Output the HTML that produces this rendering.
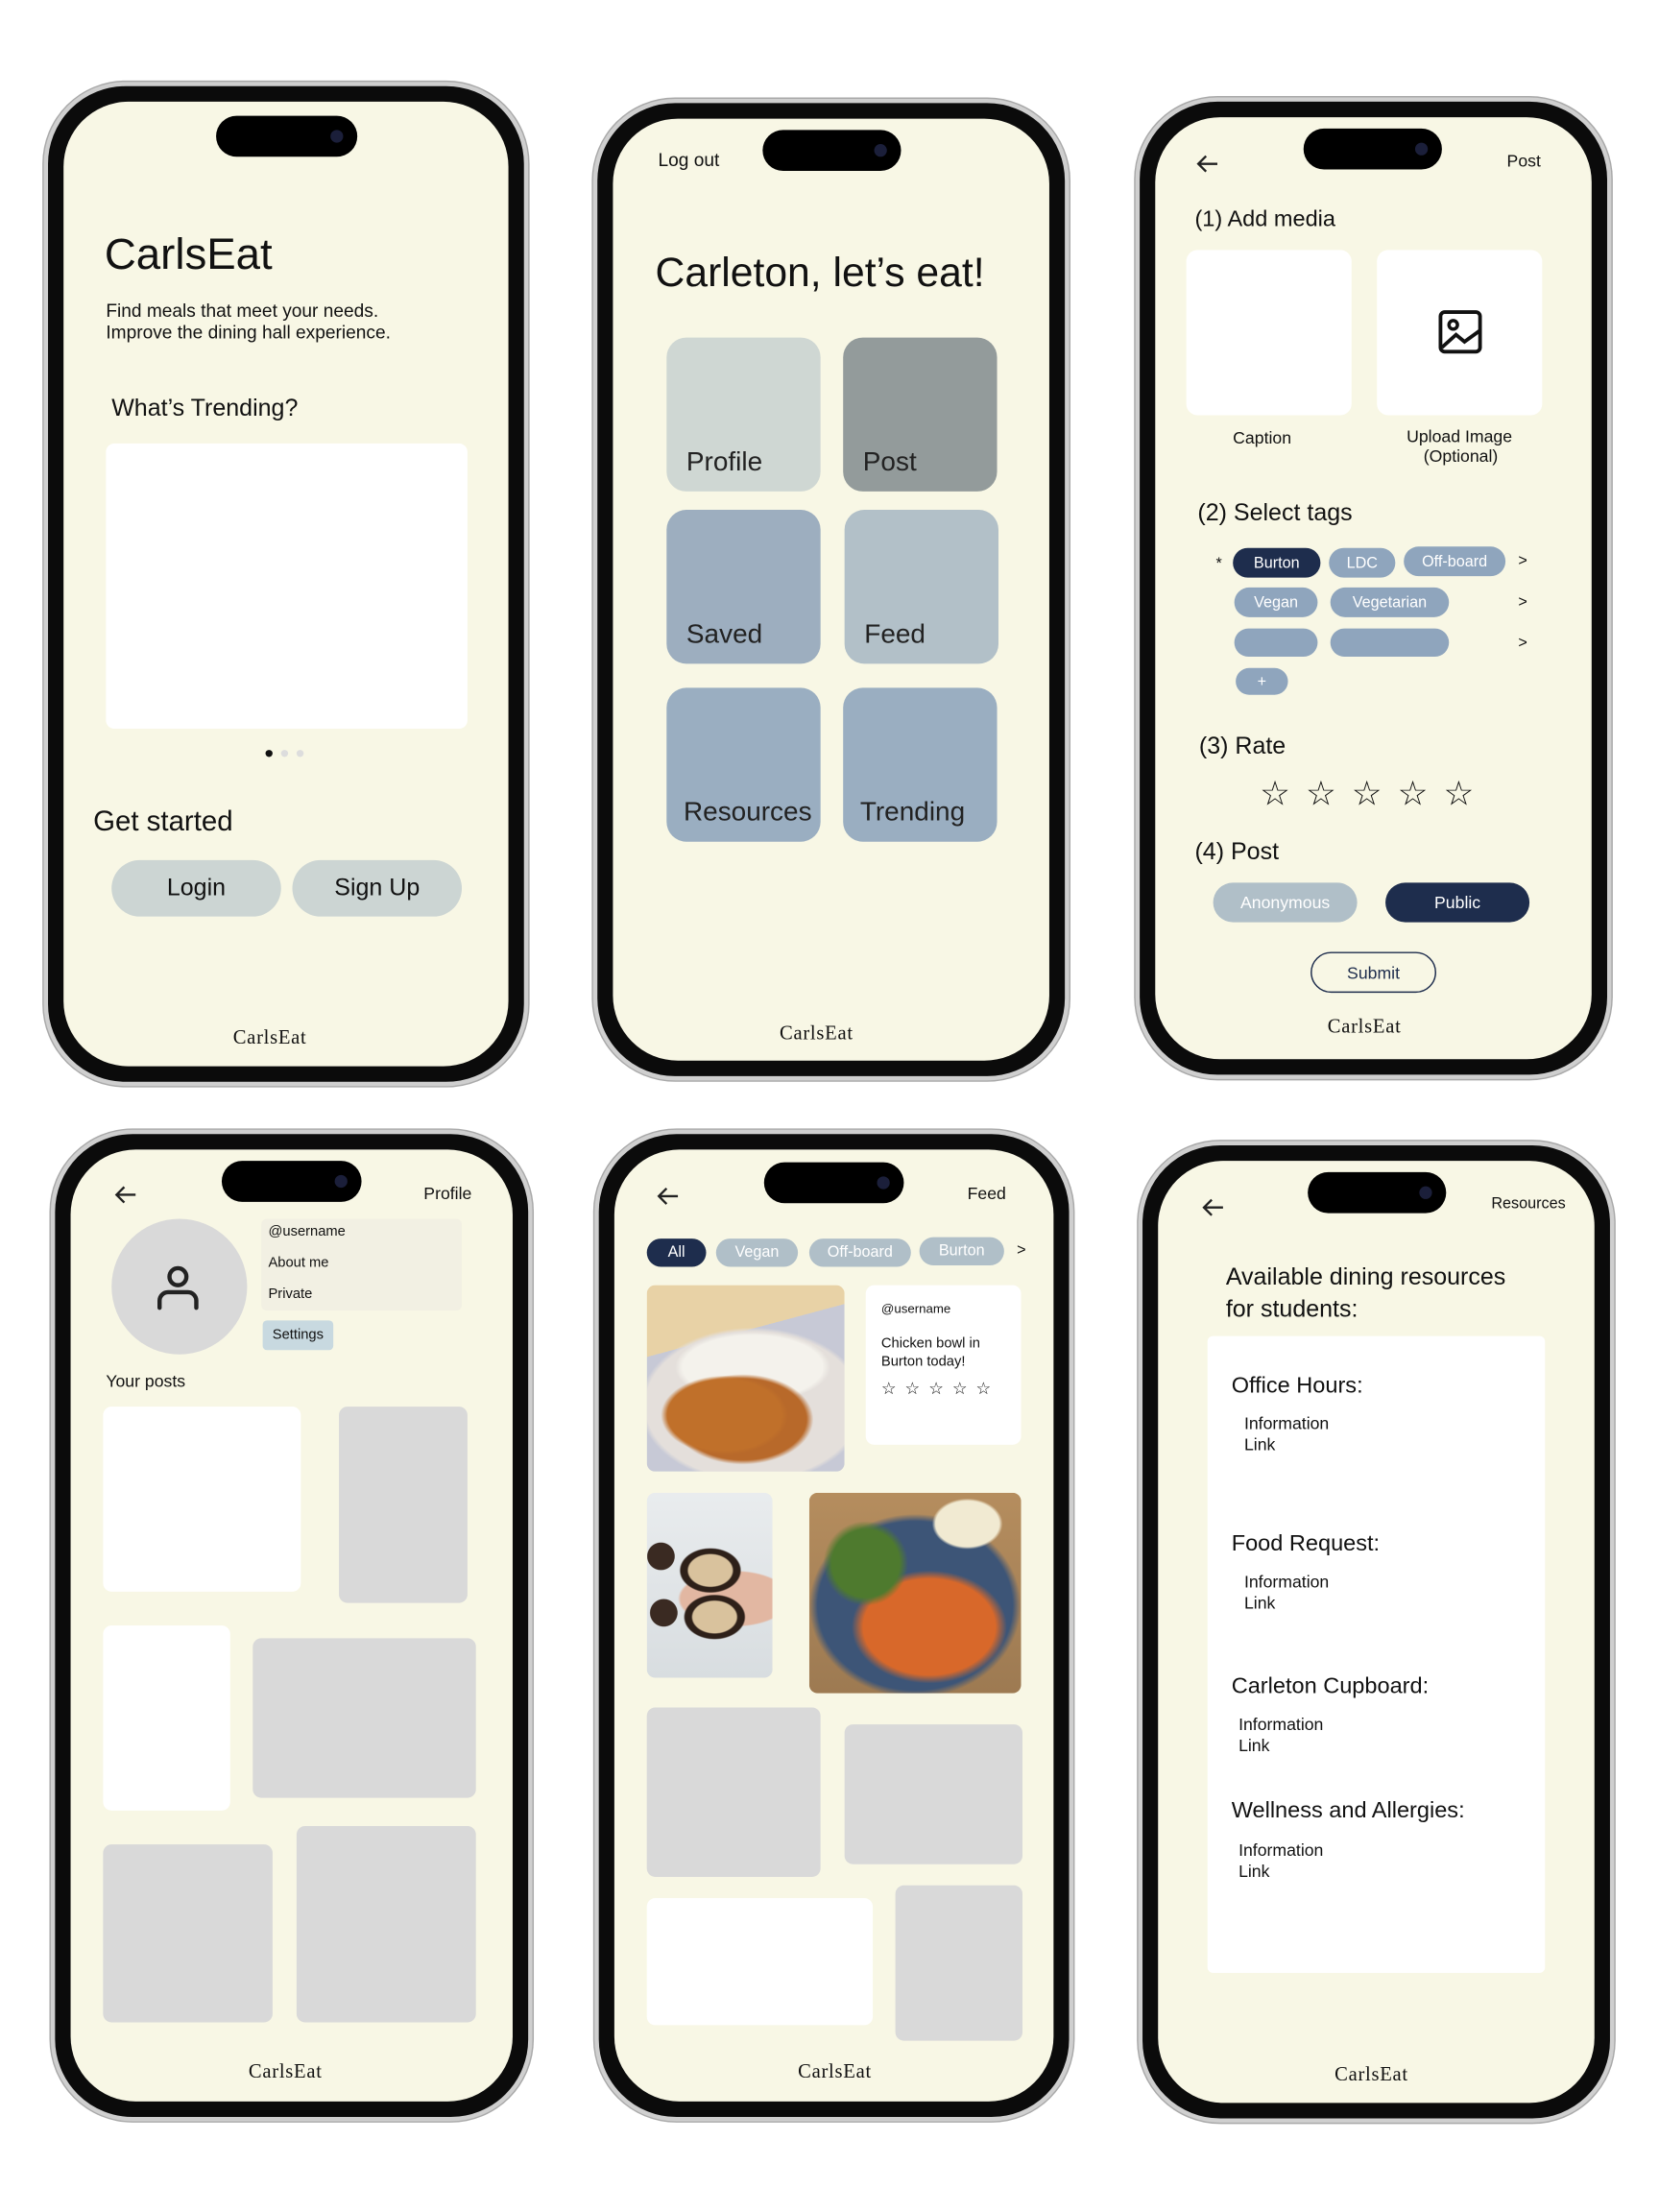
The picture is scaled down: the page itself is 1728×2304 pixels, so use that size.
<!DOCTYPE html>
<html><head><meta charset="utf-8">
<style>
*{margin:0;padding:0;box-sizing:border-box}
html,body{width:1728px;height:2304px;background:#fff;overflow:hidden}
#root{position:absolute;left:0;top:0;width:1166px;height:1555px;transform:scale(1.471);transform-origin:0 0;font-family:"Liberation Sans",sans-serif;color:#111}
.ph{position:absolute;border-radius:58px;background:#0b0b0b;border:3px solid #cfcfcf;box-shadow:0 0 0 1px #a9a9a9}
.sc{position:absolute;inset:11px;border-radius:46px;background:#f8f7e5}
.isl{position:absolute;background:#000;border-radius:15px;height:29px}
.isl::after{content:"";position:absolute;right:10px;top:10px;width:9px;height:9px;border-radius:50%;background:#1b1f3a}
.t{position:absolute;line-height:1;transform:translateY(-50%);white-space:nowrap}
.b{position:absolute}
.ft{font-family:"Liberation Serif",serif;font-size:14px;letter-spacing:0.5px}
.tile{position:absolute;border-radius:14px}
.tile span{position:absolute;left:14px;bottom:9px;font-size:19px;color:#222}
.chip{position:absolute;border-radius:11px;color:#fff;font-size:11px;display:flex;align-items:center;justify-content:center}
.wh{background:#fff}
.gr{background:#d9d9d9}
</style></head><body><div id="root">

<div class="ph" style="left:31px;top:58px;width:343px;height:711px"><div class="sc"></div></div>
<div class="ph" style="left:420px;top:70px;width:337px;height:695px"><div class="sc"></div></div>
<div class="ph" style="left:804px;top:69px;width:337px;height:695px"><div class="sc"></div></div>
<div class="ph" style="left:36px;top:800px;width:341px;height:702px"><div class="sc"></div></div>
<div class="ph" style="left:421px;top:800px;width:339px;height:702px"><div class="sc"></div></div>
<div class="ph" style="left:806px;top:808px;width:337px;height:695px"><div class="sc"></div></div>

<div class="isl" style="left:153px;top:82px;width:100px"></div>
<div class="isl" style="left:540px;top:92px;width:98px"></div>
<div class="isl" style="left:923px;top:91px;width:98px"></div>
<div class="isl" style="left:157px;top:822px;width:99px"></div>
<div class="isl" style="left:541px;top:823px;width:99px"></div>
<div class="isl" style="left:926px;top:830px;width:98px"></div>

<!-- Phone 1 -->
<div class="t" style="left:74px;top:180px;font-size:31px">CarlsEat</div>
<div class="t" style="left:75px;top:220px;font-size:13px">Find meals that meet your needs.</div>
<div class="t" style="left:75px;top:235px;font-size:13px">Improve the dining hall experience.</div>
<div class="t" style="left:79px;top:289px;font-size:17px">What’s Trending?</div>
<div class="b wh" style="left:75px;top:314px;width:256px;height:202px;border-radius:6px"></div>
<div class="b" style="left:188px;top:531px;width:5px;height:5px;border-radius:50%;background:#111"></div>
<div class="b" style="left:199px;top:531px;width:5px;height:5px;border-radius:50%;background:#ddd"></div>
<div class="b" style="left:210px;top:531px;width:5px;height:5px;border-radius:50%;background:#ddd"></div>
<div class="t" style="left:66px;top:582px;font-size:20px">Get started</div>
<div class="b" style="left:79px;top:609px;width:120px;height:40px;border-radius:20px;background:#ccd5d3;font-size:17px;display:flex;align-items:center;justify-content:center">Login</div>
<div class="b" style="left:207px;top:609px;width:120px;height:40px;border-radius:20px;background:#ccd5d3;font-size:17px;display:flex;align-items:center;justify-content:center">Sign Up</div>
<div class="t ft" style="left:165px;top:736px">CarlsEat</div>

<!-- Phone 2 -->
<div class="t" style="left:466px;top:113px;font-size:13px">Log out</div>
<div class="t" style="left:464px;top:194px;font-size:29px">Carleton, let’s eat!</div>
<div class="tile" style="left:472px;top:239px;width:109px;height:109px;background:#cfd7d3"><span>Profile</span></div>
<div class="tile" style="left:597px;top:239px;width:109px;height:109px;background:#939b9b"><span>Post</span></div>
<div class="tile" style="left:472px;top:361px;width:109px;height:109px;background:#9daebf"><span>Saved</span></div>
<div class="tile" style="left:598px;top:361px;width:109px;height:109px;background:#b2c0c8"><span>Feed</span></div>
<div class="tile" style="left:472px;top:487px;width:109px;height:109px;background:#9aaec1"><span style="left:12px">Resources</span></div>
<div class="tile" style="left:597px;top:487px;width:109px;height:109px;background:#9aaec1"><span style="left:12px">Trending</span></div>
<div class="t ft" style="left:552px;top:733px">CarlsEat</div>

<!-- Phone 3 -->
<svg class="b" style="left:847px;top:109px" width="16" height="14" viewBox="0 0 16 14"><path d="M15 7H2M7 1.5L1.5 7 7 12.5" fill="none" stroke="#222" stroke-width="1.6"/></svg>
<div class="t" style="left:1067px;top:114px;font-size:12px">Post</div>
<div class="t" style="left:846px;top:156px;font-size:16px">(1) Add media</div>
<div class="b wh" style="left:840px;top:177px;width:117px;height:117px;border-radius:8px"></div>
<div class="b wh" style="left:975px;top:177px;width:117px;height:117px;border-radius:8px"></div>
<svg class="b" style="left:1018px;top:219px" width="32" height="32" viewBox="0 0 32 32"><rect x="2" y="2" width="28" height="28" rx="3" fill="none" stroke="#111" stroke-width="2.6"/><circle cx="11" cy="11" r="3" fill="none" stroke="#111" stroke-width="2.4"/><path d="M3 27L13 18 19 23 30 15" fill="none" stroke="#111" stroke-width="2.6"/></svg>
<div class="t" style="left:873px;top:310px;font-size:12px">Caption</div>
<div class="t" style="left:996px;top:309px;font-size:12px">Upload Image</div>
<div class="t" style="left:1008px;top:323px;font-size:12px">(Optional)</div>
<div class="t" style="left:848px;top:363px;font-size:17px">(2) Select tags</div>
<div class="t" style="left:861px;top:400px;font-size:11px">*</div>
<div class="chip" style="left:873px;top:388px;width:62px;height:21px;background:#1e2d4d">Burton</div>
<div class="chip" style="left:941px;top:388px;width:47px;height:21px;background:#8fa5bd">LDC</div>
<div class="chip" style="left:994px;top:387px;width:72px;height:21px;background:#8fa5bd">Off-board</div>
<div class="t" style="left:1075px;top:398px;font-size:11px">&gt;</div>
<div class="chip" style="left:874px;top:416px;width:59px;height:21px;background:#8fa5bd">Vegan</div>
<div class="chip" style="left:942px;top:416px;width:84px;height:21px;background:#8fa5bd">Vegetarian</div>
<div class="t" style="left:1075px;top:427px;font-size:11px">&gt;</div>
<div class="chip" style="left:874px;top:445px;width:59px;height:20px;background:#8fa5bd"></div>
<div class="chip" style="left:942px;top:445px;width:84px;height:20px;background:#8fa5bd"></div>
<div class="t" style="left:1075px;top:456px;font-size:11px">&gt;</div>
<div class="chip" style="left:875px;top:473px;width:37px;height:19px;background:#8fa5bd">+</div>
<div class="t" style="left:849px;top:528px;font-size:17px">(3) Rate</div>
<div class="t" style="left:892px;top:563px;font-size:24px;letter-spacing:11px">☆☆☆☆☆</div>
<div class="t" style="left:846px;top:603px;font-size:17px">(4) Post</div>
<div class="chip" style="left:859px;top:625px;width:102px;height:28px;border-radius:14px;background:#b0bfc8;font-size:12px">Anonymous</div>
<div class="chip" style="left:981px;top:625px;width:102px;height:28px;border-radius:14px;background:#1e2d4d;font-size:12px">Public</div>
<div class="b" style="left:928px;top:674px;width:89px;height:29px;border-radius:15px;border:1px solid #1e2d4d;font-size:12px;color:#1e2d4d;display:flex;align-items:center;justify-content:center">Submit</div>
<div class="t ft" style="left:940px;top:728px">CarlsEat</div>

<!-- Phone 4 -->
<svg class="b" style="left:81px;top:839px" width="16" height="14" viewBox="0 0 16 14"><path d="M15 7H2M7 1.5L1.5 7 7 12.5" fill="none" stroke="#222" stroke-width="1.6"/></svg>
<div class="t" style="left:300px;top:845px;font-size:12px">Profile</div>
<div class="b" style="left:79px;top:863px;width:96px;height:96px;border-radius:50%;background:#d9d9d9"></div>
<svg class="b" style="left:109px;top:893px" width="34" height="36" viewBox="0 0 34 36"><circle cx="17" cy="11" r="6" fill="none" stroke="#222" stroke-width="3"/><path d="M4 33V28a6 6 0 0 1 6-6h14a6 6 0 0 1 6 6v5" fill="none" stroke="#222" stroke-width="3" stroke-linecap="round"/></svg>
<div class="b" style="left:185px;top:863px;width:142px;height:65px;border-radius:4px;background:#f2f0e3"></div>
<div class="t" style="left:190px;top:873px;font-size:10px">@username</div>
<div class="t" style="left:190px;top:895px;font-size:10px">About me</div>
<div class="t" style="left:190px;top:917px;font-size:10px">Private</div>
<div class="b" style="left:186px;top:935px;width:50px;height:21px;border-radius:3px;background:#c8d9e0;font-size:10px;display:flex;align-items:center;justify-content:center">Settings</div>
<div class="t" style="left:75px;top:978px;font-size:12px">Your posts</div>
<div class="b wh" style="left:73px;top:996px;width:140px;height:131px;border-radius:6px"></div>
<div class="b gr" style="left:240px;top:996px;width:91px;height:139px;border-radius:6px"></div>
<div class="b wh" style="left:73px;top:1151px;width:90px;height:131px;border-radius:6px"></div>
<div class="b gr" style="left:179px;top:1160px;width:158px;height:113px;border-radius:6px"></div>
<div class="b gr" style="left:73px;top:1306px;width:120px;height:126px;border-radius:6px"></div>
<div class="b gr" style="left:210px;top:1293px;width:127px;height:139px;border-radius:6px"></div>
<div class="t ft" style="left:176px;top:1468px">CarlsEat</div>

<!-- Phone 5 -->
<svg class="b" style="left:465px;top:840px" width="16" height="14" viewBox="0 0 16 14"><path d="M15 7H2M7 1.5L1.5 7 7 12.5" fill="none" stroke="#222" stroke-width="1.6"/></svg>
<div class="t" style="left:685px;top:845px;font-size:12px">Feed</div>
<div class="chip" style="left:458px;top:877px;width:42px;height:20px;background:#1e2d4d">All</div>
<div class="chip" style="left:507px;top:877px;width:58px;height:20px;background:#b0bfc8">Vegan</div>
<div class="chip" style="left:573px;top:877px;width:72px;height:20px;background:#b0bfc8">Off-board</div>
<div class="chip" style="left:651px;top:876px;width:60px;height:20px;background:#b0bfc8">Burton</div>
<div class="t" style="left:720px;top:886px;font-size:11px">&gt;</div>
<div class="b" style="left:458px;top:910px;width:140px;height:132px;border-radius:6px;overflow:hidden;background:
radial-gradient(ellipse 45px 28px at 55px 92px,#c0702a 0 90%,transparent 100%),
radial-gradient(ellipse 50px 32px at 68px 95px,#b8692a 0 90%,transparent 100%),
radial-gradient(ellipse 55px 25px at 75px 58px,#f4f2ec 0 90%,transparent 100%),
radial-gradient(ellipse 80px 55px at 75px 85px,#e4dfdb 0 95%,transparent 100%),
linear-gradient(165deg,#e8d2a6 0 30%,#c7c9d6 30%)"></div>
<div class="b wh" style="left:613px;top:910px;width:110px;height:113px;border-radius:6px"></div>
<div class="t" style="left:624px;top:927px;font-size:9px">@username</div>
<div class="t" style="left:624px;top:952px;font-size:10px">Chicken bowl in</div>
<div class="t" style="left:624px;top:965px;font-size:10px">Burton today!</div>
<div class="t" style="left:624px;top:983px;font-size:12px;letter-spacing:6px">☆☆☆☆☆</div>
<div class="b" style="left:458px;top:1057px;width:89px;height:131px;border-radius:6px;overflow:hidden;background:
radial-gradient(circle 10px at 10px 45px,#3a2a22 0 95%,transparent 100%),
radial-gradient(circle 10px at 12px 85px,#3a2a22 0 95%,transparent 100%),
radial-gradient(ellipse 22px 16px at 45px 55px,#d9c29d 0 70%,#2e2019 75% 95%,transparent 100%),
radial-gradient(ellipse 22px 16px at 48px 88px,#d9c29d 0 70%,#2e2019 75% 95%,transparent 100%),
radial-gradient(ellipse 40px 20px at 62px 75px,#e2b7a2 0 95%,transparent 100%),
linear-gradient(#e9ecee,#d8dde0)"></div>
<div class="b" style="left:573px;top:1057px;width:150px;height:142px;border-radius:6px;overflow:hidden;background:
radial-gradient(ellipse 25px 18px at 112px 22px,#f1ead2 0 90%,transparent 100%),
radial-gradient(ellipse 30px 30px at 40px 50px,#4e7a2e 0 80%,transparent 100%),
radial-gradient(ellipse 55px 40px at 85px 95px,#d8682a 0 85%,transparent 100%),
radial-gradient(ellipse 75px 65px at 75px 80px,#3d5577 0 92%,transparent 100%),
linear-gradient(#b58d5e,#9d7a52)"></div>
<div class="b gr" style="left:458px;top:1209px;width:123px;height:120px;border-radius:6px"></div>
<div class="b gr" style="left:598px;top:1221px;width:126px;height:99px;border-radius:6px"></div>
<div class="b wh" style="left:458px;top:1344px;width:160px;height:90px;border-radius:6px"></div>
<div class="b gr" style="left:634px;top:1335px;width:90px;height:110px;border-radius:6px"></div>
<div class="t ft" style="left:565px;top:1468px">CarlsEat</div>

<!-- Phone 6 -->
<svg class="b" style="left:851px;top:848px" width="16" height="14" viewBox="0 0 16 14"><path d="M15 7H2M7 1.5L1.5 7 7 12.5" fill="none" stroke="#222" stroke-width="1.6"/></svg>
<div class="t" style="left:1056px;top:853px;font-size:11px">Resources</div>
<div class="t" style="left:868px;top:904px;font-size:17px">Available dining resources</div>
<div class="t" style="left:868px;top:927px;font-size:17px">for students:</div>
<div class="b wh" style="left:855px;top:946px;width:239px;height:451px;border-radius:4px"></div>
<div class="t" style="left:872px;top:982px;font-size:16px">Office Hours:</div>
<div class="t" style="left:881px;top:1008px;font-size:12px">Information</div>
<div class="t" style="left:881px;top:1023px;font-size:12px">Link</div>
<div class="t" style="left:872px;top:1094px;font-size:16px">Food Request:</div>
<div class="t" style="left:881px;top:1120px;font-size:12px">Information</div>
<div class="t" style="left:881px;top:1135px;font-size:12px">Link</div>
<div class="t" style="left:872px;top:1195px;font-size:16px">Carleton Cupboard:</div>
<div class="t" style="left:877px;top:1221px;font-size:12px">Information</div>
<div class="t" style="left:877px;top:1236px;font-size:12px">Link</div>
<div class="t" style="left:872px;top:1283px;font-size:16px">Wellness and Allergies:</div>
<div class="t" style="left:877px;top:1310px;font-size:12px">Information</div>
<div class="t" style="left:877px;top:1325px;font-size:12px">Link</div>
<div class="t ft" style="left:945px;top:1470px">CarlsEat</div>

</div></body></html>
